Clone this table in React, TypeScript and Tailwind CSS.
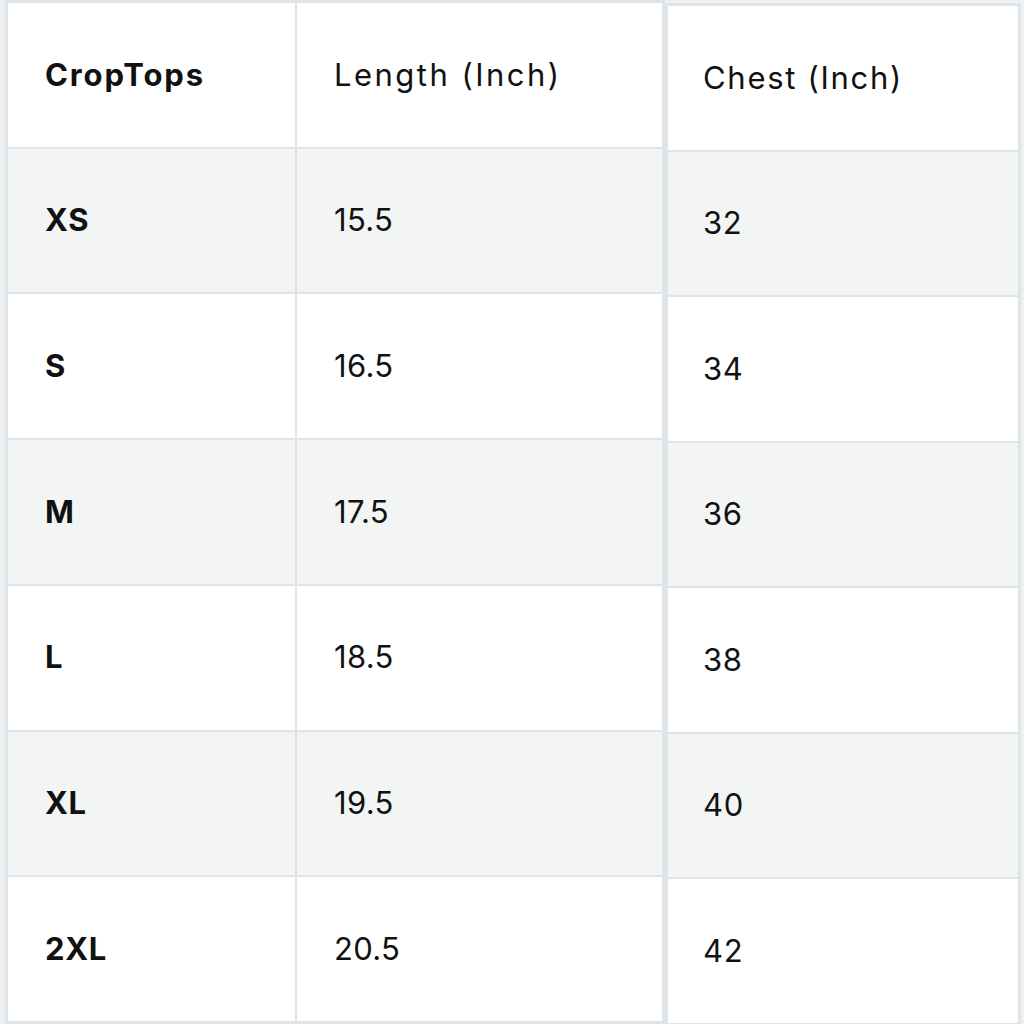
import React from "react";

const rows = [
  ["XS", "15.5", "32"],
  ["S", "16.5", "34"],
  ["M", "17.5", "36"],
  ["L", "18.5", "38"],
  ["XL", "19.5", "40"],
  ["2XL", "20.5", "42"],
];

const font = { fontFamily: "Inter, 'Liberation Sans', sans-serif" };

export default function App() {
  return (
    <div
      className="w-[1024px] h-[1024px] bg-[#eef1f4] flex items-start overflow-hidden text-[#111111]"
      style={font}
    >
      <div className="ml-[5px] w-[660px] h-[1024px] bg-[#dfe4e8] p-[3px] pb-[3px]">
        <div className="grid grid-cols-[287px_365px] grid-rows-7 gap-x-[2px] gap-y-[2px] h-[1018px]">
          <div className="bg-white flex items-center pl-[37px] text-[31px] font-bold tracking-[0.06em]">CropTops</div>
          <div className="bg-white flex items-center pl-[37px] text-[31px] tracking-[0.08em]">Length (Inch)</div>
          {rows.map((r, i) => (
            <React.Fragment key={r[0]}>
              <div className={`${i % 2 === 0 ? "bg-[#f3f5f4]" : "bg-white"} flex items-center pl-[37px] text-[31px] font-bold tracking-[0.02em]`}>{r[0]}</div>
              <div className={`${i % 2 === 0 ? "bg-[#f3f5f4]" : "bg-white"} flex items-center pl-[37px] text-[31px] tracking-[0.01em]`}>{r[1]}</div>
            </React.Fragment>
          ))}
        </div>
      </div>
      <div className="mt-[3px] w-[356px] h-[1024px] bg-[#dfe4e8] p-[3px]">
        <div className="grid grid-cols-1 grid-rows-7 gap-y-[2px] h-[1017px]">
          <div className="bg-white flex items-center pl-[35px] text-[31px] tracking-[0.055em]">Chest (Inch)</div>
          {rows.map((r, i) => (
            <div key={r[0]} className={`${i % 2 === 0 ? "bg-[#f3f5f4]" : "bg-white"} flex items-center pl-[35px] text-[31px] tracking-[0.02em]`}>{r[2]}</div>
          ))}
        </div>
      </div>
    </div>
  );
}
